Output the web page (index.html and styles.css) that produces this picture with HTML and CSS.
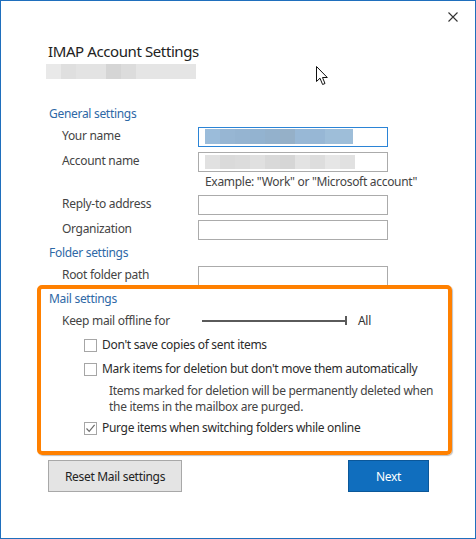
FILE: index.html
```html
<!DOCTYPE html>
<html lang="en">
<head>
<meta charset="utf-8">
<title>IMAP Account Settings</title>
<link rel="stylesheet" href="styles.css">
</head>
<body>
<div class="window">
  <div class="topbar">
    <svg class="close" width="10" height="10" viewBox="0 0 10 10"><path d="M0.5 0.5L9.5 9.5M9.5 0.5L0.5 9.5" stroke="#333" stroke-width="1.1" fill="none"/></svg>
  </div>
  <h1 class="title">IMAP Account Settings</h1>
  <div class="blur-sub"></div>

  <div class="section-head first">General settings</div>
  <div class="row">
    <span class="label">Your name</span>
    <div class="input focused"><div class="blur blur-blue"></div></div>
  </div>
  <div class="row">
    <span class="label">Account name</span>
    <div class="input"><div class="blur blur-gray"></div></div>
  </div>
  <div class="example">Example: "Work" or "Microsoft account"</div>
  <div class="row">
    <span class="label">Reply-to address</span>
    <div class="input"></div>
  </div>
  <div class="row">
    <span class="label">Organization</span>
    <div class="input"></div>
  </div>

  <div class="section-head">Folder settings</div>
  <div class="row">
    <span class="label">Root folder path</span>
    <div class="input"></div>
  </div>

  <div class="mail">
    <div class="section-head mail-head">Mail settings</div>
    <div class="keep-row">
      <span class="label">Keep mail offline for</span>
      <div class="slider"><div class="track"></div><div class="tick"></div></div>
      <span class="all">All</span>
    </div>
    <div class="check-row first-check">
      <span class="box"></span>
      <span class="check-text">Don't save copies of sent items</span>
    </div>
    <div class="check-row">
      <span class="box"></span>
      <span class="check-text">Mark items for deletion but don't move them automatically</span>
    </div>
    <div class="desc">Items marked for deletion will be permanently deleted when<br>the items in the mailbox are purged.</div>
    <div class="check-row last-check">
      <span class="box checked"><svg width="11" height="11" viewBox="0 0 11 11"><path d="M1.5 5.5L4.2 8.3L9.6 1.8" stroke="#6b6b6b" stroke-width="1.2" fill="none"/></svg></span>
      <span class="check-text">Purge items when switching folders while online</span>
    </div>
  </div>

  <div class="buttons">
    <button class="btn reset">Reset Mail settings</button>
    <button class="btn next">Next</button>
  </div>

  <svg class="cursor" width="13" height="20" viewBox="0 0 13 20"><path d="M0.5 0.5L0.5 15.5L4 12.2L6.6 18.5L9 17.5L6.5 11.5L11.3 11.5Z" fill="#fff" stroke="#111" stroke-width="1" stroke-linejoin="miter"/></svg>
</div>
</body>
</html>
```
FILE: styles.css
```css
* { box-sizing: border-box; }
html, body { margin: 0; padding: 0; background: #fff; }
body {
  font-family: "Noto Sans", "Open Sans", "Liberation Sans", sans-serif;
  font-size: 12px;
  letter-spacing: -0.3px;
  color: #444;
}
.window {
  position: relative;
  width: 476px;
  height: 539px;
  border: 1px solid #1f6fbd;
  padding: 11px 0 0 47px;
  background: #fff;
}
.topbar {
  display: flex;
  justify-content: flex-end;
  padding-right: 17px;
  height: 10px;
}
.close { display: block; }
.title {
  margin: 19px 0 0 0;
  font-size: 15px;
  line-height: 20px;
  font-weight: normal;
  letter-spacing: -0.4px;
  color: #222;
}
.blur-sub {
  margin-top: 3px;
  width: 150px;
  height: 15px;
  margin-left: -2px;
  background: linear-gradient(to right,
    #e9e9e9 0 15px, #dfdfdf 15px 30px, #e3e3e3 30px 60px, #d5d5d5 60px 75px,
    #dcdcdc 75px 90px, #e5e5e5 90px 150px);
}
.section-head {
  margin-top: 5px;
  padding-left: 1px;
  line-height: 16px;
  color: #2e68a6;
}
.section-head.first { margin-top: 27px; }
.row {
  display: flex;
  align-items: flex-start;
  margin-top: 5px;
  padding-left: 14px;
}
.label {
  width: 136px;
  line-height: 17px;
  flex: none;
}
.input {
  width: 190px;
  height: 20px;
  border: 1px solid #ababab;
  background: #fff;
  padding: 2px 0 0 6px;
}
.input.focused { border-color: #2b84d6; padding-top: 1px; }
.blur { height: 15px; }
.blur-blue {
  width: 148px;
  background: linear-gradient(to right,
    #9bbcda 0 15px, #97b6d3 15px 30px, #95b4d1 30px 45px, #93b3d0 45px 60px,
    #93b1cc 60px 75px, #95b0c8 75px 90px, #98b8d6 90px 105px, #97b7d5 105px 120px,
    #9ebed9 120px 148px);
}
.blur-gray {
  width: 150px;
  height: 14px;
  background: linear-gradient(to right,
    #e1e1e1 0 15px, #dadada 15px 30px, #dcdcdc 30px 45px, #e0e0e0 45px 60px,
    #d9d9d9 60px 75px, #d6d6d6 75px 90px, #e3e3e3 90px 105px, #dddddd 105px 120px,
    #e6e6e6 120px 135px, #e1e1e1 135px 150px);
}
.example {
  margin-top: 2px;
  padding-left: 157px;
  line-height: 16px;
}

.mail {
  position: relative;
}
.mail::before {
  content: "";
  position: absolute;
  left: -11px;
  top: -6px;
  width: 407px;
  height: 162px;
  border: 4px solid #ff8000;
  border-radius: 5px;
  box-shadow: 1px 1px 1px rgba(0, 0, 0, 0.25);
  pointer-events: none;
}
.keep-row {
  display: flex;
  align-items: center;
  margin-top: 5px;
  padding-left: 14px;
  line-height: 16px;
}
.slider {
  position: relative;
  width: 145px;
  height: 16px;
  margin-left: 4px;
  display: flex;
  align-items: center;
}
.track {
  width: 143px;
  height: 2px;
  background: #5a5a5a;
}
.tick {
  width: 2px;
  height: 9px;
  background: #5a5a5a;
}
.all {
  margin-left: 11px;
  color: #333;
}
.check-row {
  display: flex;
  align-items: flex-start;
  margin-top: 8px;
  padding-left: 36px;
  line-height: 16px;
  color: #2b2b2b;
}
.check-row.first-check { margin-top: 8px; }
.check-row.last-check { margin-top: 5px; }
.box {
  width: 13px;
  height: 13px;
  margin-top: 2px;
  border: 1px solid #a6a6a6;
  background: #fff;
  flex: none;
  display: flex;
  align-items: center;
  justify-content: center;
}
.check-text { margin-left: 5px; }
.desc {
  margin-top: 6px;
  padding-left: 61px;
  line-height: 16px;
  color: #444;
}
.buttons {
  display: flex;
  justify-content: space-between;
  margin-top: 24px;
  padding-right: 46px;
}
.btn {
  height: 32px;
  font-family: inherit;
  font-size: 12px;
  letter-spacing: -0.3px;
  padding: 0;
  cursor: default;
}
.reset {
  width: 134px;
  background: #e4e4e4;
  border: 1px solid #a8a8a8;
  color: #222;
}
.next {
  width: 81px;
  background: #106ebe;
  border: 1px solid #0b5799;
  color: #fff;
}
.cursor {
  position: absolute;
  left: 315px;
  top: 65px;
}
```
